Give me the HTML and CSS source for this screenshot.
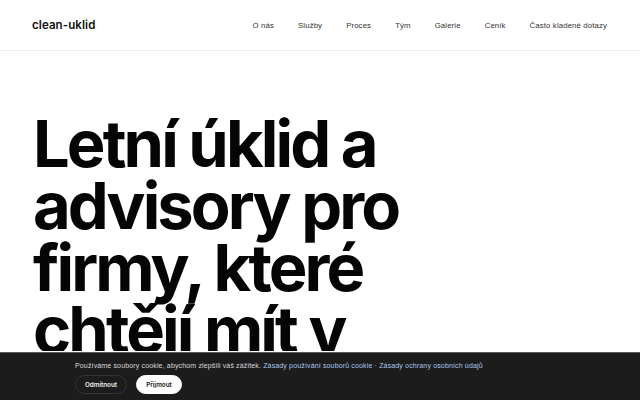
FILE: index.html
```html
<!DOCTYPE html>
<html lang="cs">
<head>
<meta charset="utf-8">
<title>clean-uklid</title>
<link rel="stylesheet" href="styles.css">
</head>
<body>
<header class="site-header">
  <a class="logo" href="#">clean-uklid</a>
  <nav class="nav">
    <a href="#">O nás</a>
    <a href="#">Služby</a>
    <a href="#">Proces</a>
    <a href="#">Tým</a>
    <a href="#">Galerie</a>
    <a href="#">Ceník</a>
    <a href="#">Často kladené dotazy</a>
  </nav>
</header>
<main class="hero">
  <h1 class="hero-title">Letní úklid a advisory pro firmy, které chtějí mít v pořádku</h1>
</main>
<div class="cookie">
  <div class="cookie-inner">
    <p class="cookie-text">Používáme soubory cookie, abychom zlepšili váš zážitek. <a href="#">Zásady používání souborů cookie</a> · <a href="#">Zásady ochrany osobních údajů</a></p>
    <div class="cookie-actions">
      <button class="btn btn-dark">Odmítnout</button>
      <button class="btn btn-light">Přijmout</button>
    </div>
  </div>
</div>
</body>
</html>
```
FILE: styles.css
```css
* { box-sizing: border-box; }
html, body { margin: 0; padding: 0; }
body {
  background: #fff;
  color: #111;
  font-family: Inter, "Liberation Sans", sans-serif;
  overflow: hidden;
  height: 400px;
}
a { color: inherit; text-decoration: none; }
.site-header {
  height: 51px;
  display: flex;
  align-items: center;
  justify-content: space-between;
  padding: 0 33px 0 32px;
  border-bottom: 1px solid #efefef;
}
.logo {
  font-size: 11.5px;
  font-weight: 600;
  color: #111;
  letter-spacing: 0.1px;
}
.nav {
  display: flex;
  gap: 24px;
  font-family: "Liberation Sans", Arial, sans-serif;
  font-size: 7.8px;
  color: #333;
  letter-spacing: 0.12px;
}
.hero {
  padding: 62px 33px 0;
  height: 300px;
  overflow: hidden;
}
.hero-title {
  margin: 0;
  font-size: 65px;
  line-height: 62px;
  font-weight: 700;
  letter-spacing: -2.9px;
  color: #050505;
  max-width: 400px;
}
.cookie {
  position: fixed;
  left: 0;
  right: 0;
  bottom: 0;
  height: 48px;
  background: #1c1c1c;
  border-top: 1px solid #5a5a5a;
}
.cookie-inner {
  padding: 8px 75px 0;
  display: flex;
  flex-direction: column;
  gap: 5px;
}
.cookie-text {
  margin: 0;
  font-family: "Liberation Sans", Arial, sans-serif;
  font-size: 7px;
  line-height: 9px;
  color: #d8d8d8;
  letter-spacing: 0.15px;
}
.cookie-text a { color: #a9c6ec; }
.cookie-actions { display: flex; gap: 9px; }
.btn {
  height: 19px;
  border-radius: 10px;
  font-family: Inter, "Liberation Sans", sans-serif;
  font-size: 6.3px;
  font-weight: 600;
  padding: 0;
  text-align: center;
  cursor: pointer;
}
.btn-dark {
  background: #1c1c1c;
  color: #eee;
  border: 1px solid #333;
  width: 52px;
}
.btn-light {
  background: #fff;
  color: #111;
  border: 1px solid #fff;
  width: 46px;
}
```
